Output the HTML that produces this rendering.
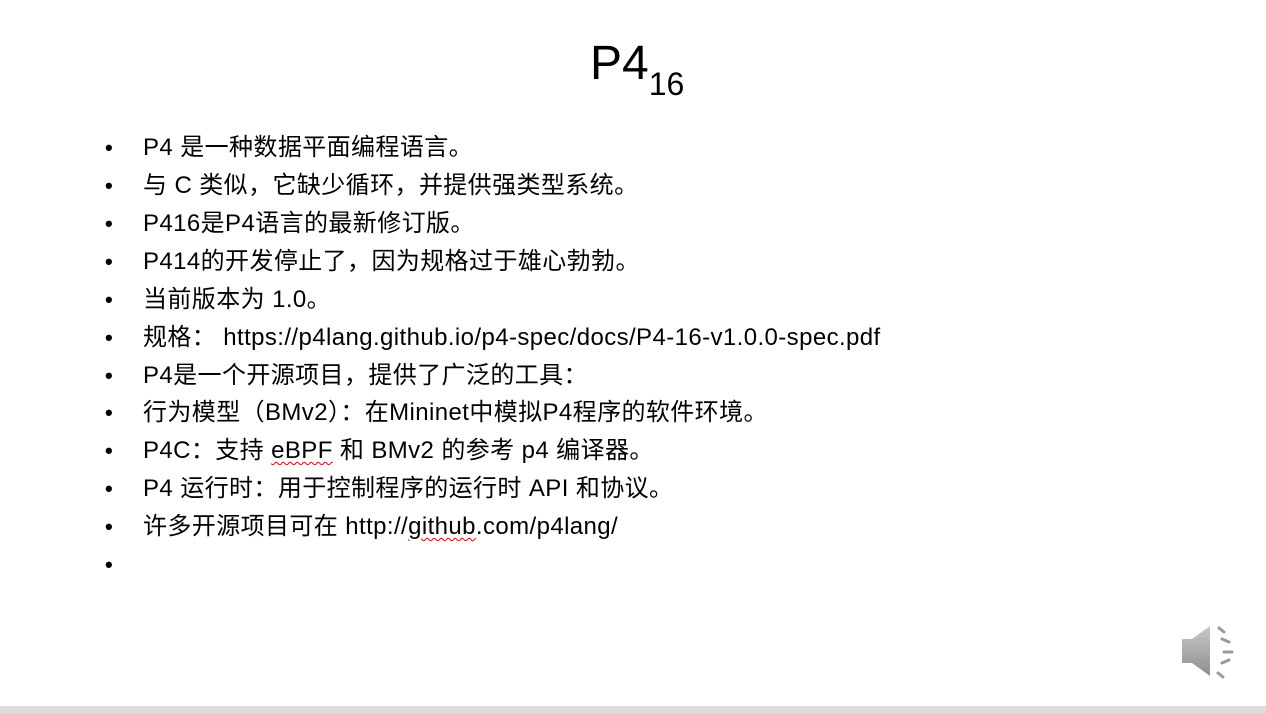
<!DOCTYPE html>
<html><head><meta charset="utf-8"><style>
html,body{margin:0;padding:0;background:#fff;}
body{width:1266px;height:713px;position:relative;overflow:hidden;font-family:"Liberation Sans","Noto Sans CJK SC",sans-serif;color:#000;}
.t{position:absolute;left:590px;top:36px;font-size:48px;line-height:56px;}
.t sub{font-size:32px;vertical-align:-16px;}
.l{position:absolute;left:0;font-size:24px;line-height:30px;white-space:nowrap;letter-spacing:0.4px;}
.l b{position:absolute;left:105px;font-weight:bold;font-size:22px;}
.l span{position:absolute;left:143px;}
.u{text-decoration:underline wavy #d00;text-decoration-thickness:1px;text-underline-offset:3px;}
.bar{position:absolute;left:0;right:0;top:706px;height:7px;background:#dcdcdc;}
</style></head><body>
<div class="t">P4<sub>16</sub></div>
<div class="l" style="top:133px"><b>•</b><span>P4 是一种数据平面编程语言。</span></div>
<div class="l" style="top:171px"><b>•</b><span>与 C 类似，它缺少循环，并提供强类型系统。</span></div>
<div class="l" style="top:209px"><b>•</b><span>P416是P4语言的最新修订版。</span></div>
<div class="l" style="top:247px"><b>•</b><span>P414的开发停止了，因为规格过于雄心勃勃。</span></div>
<div class="l" style="top:285px"><b>•</b><span>当前版本为 1.0。</span></div>
<div class="l" style="top:323px"><b>•</b><span>规格：&nbsp;https://p4lang.github.io/p4-spec/docs/P4-16-v1.0.0-spec.pdf</span></div>
<div class="l" style="top:361px"><b>•</b><span>P4是一个开源项目，提供了广泛的工具：</span></div>
<div class="l" style="top:398px"><b>•</b><span>行为模型（BMv2）：在Mininet中模拟P4程序的软件环境。</span></div>
<div class="l" style="top:436px"><b>•</b><span>P4C：支持 <span class="u" style="position:static">eBPF</span> 和 BMv2 的参考 p4 编译器。</span></div>
<div class="l" style="top:474px"><b>•</b><span>P4 运行时：用于控制程序的运行时 API 和协议。</span></div>
<div class="l" style="top:512px"><b>•</b><span>许多开源项目可在 http://<span class="u" style="position:static">github</span>.com/p4lang/</span></div>
<div class="l" style="top:550px"><b>•</b></div>
<svg style="position:absolute;left:1176px;top:620px" width="70" height="64" viewBox="0 0 70 64">
<defs><linearGradient id="g" x1="0" x2="0" y1="0" y2="1"><stop offset="0" stop-color="#c8c8c8"/><stop offset="1" stop-color="#8e8e8e"/></linearGradient></defs>
<path d="M6 19 H16 L34 6 V56 L16 43 H6 Z" fill="url(#g)"/>
<g stroke="#999" stroke-width="3" stroke-linecap="round" fill="none">
<path d="M43 8 L48 12"/><path d="M46 19 L53 22"/><path d="M48 32 L56 32"/><path d="M46 43 L53 40"/><path d="M42 53 L47 57"/>
</g></svg>
<div class="bar"></div>
</body></html>
